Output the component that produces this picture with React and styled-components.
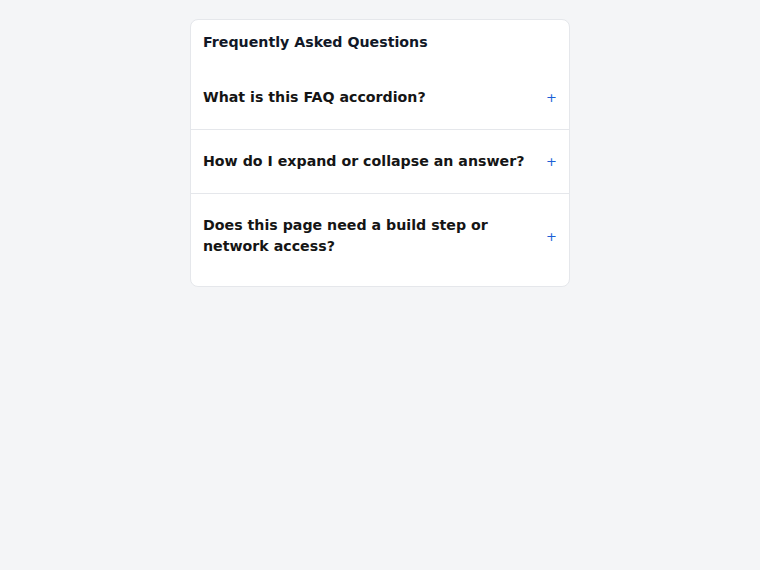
import React, { useState } from 'react'
import styled, { createGlobalStyle } from 'styled-components'

const GlobalStyle = createGlobalStyle`
  html, body {
    margin: 0;
    padding: 0;
    background: #f4f5f7;
    font-family: "DejaVu Sans", sans-serif;
    color: #111827;
  }
`

const Page = styled.main`
  display: flex;
  justify-content: center;
  padding-top: 19px;
`

const Card = styled.section`
  width: 378px;
  background: #ffffff;
  border: 1px solid #e5e7eb;
  border-radius: 8px;
  padding-bottom: 8px;
`

const Title = styled.h2`
  margin: 0;
  padding: 12px 12px 13px;
  font-size: 14.2px;
  line-height: 21px;
  font-weight: 700;
`

const Item = styled.div`
  border-bottom: ${(p) => (p.$last ? 'none' : '1px solid #e5e7eb')};
`

const Question = styled.button`
  display: flex;
  align-items: center;
  justify-content: space-between;
  gap: 16px;
  width: 100%;
  padding: 21px 12px;
  border: 0;
  background: none;
  text-align: left;
  font-family: inherit;
  font-size: 14.2px;
  line-height: 21px;
  font-weight: 700;
  color: #151515;
  cursor: pointer;
`

const Sign = styled.span`
  flex: none;
  font-size: 13px;
  font-weight: 400;
  color: #1d5fd6;
`

const Answer = styled.p`
  margin: 0;
  padding: 0 12px 16px;
  font-size: 13px;
  line-height: 20px;
  color: #4b5563;
`

const faqs = [
  {
    q: 'What is this FAQ accordion?',
    a: 'A simple list of questions that reveal their answers when clicked.',
  },
  {
    q: 'How do I expand or collapse an answer?',
    a: 'Click a question to toggle its answer open or closed.',
  },
  {
    q: 'Does this page need a build step or network access?',
    a: 'No. It runs entirely in the browser without any network requests.',
  },
]

const App = () => {
  const [open, setOpen] = useState(null)

  return (
    <>
      <GlobalStyle />
      <Page>
        <Card>
          <Title>Frequently Asked Questions</Title>
          {faqs.map((f, i) => (
            <Item key={f.q} $last={i === faqs.length - 1}>
              <Question onClick={() => setOpen(open === i ? null : i)}>
                <span>{f.q}</span>
                <Sign>{open === i ? '−' : '+'}</Sign>
              </Question>
              {open === i && <Answer>{f.a}</Answer>}
            </Item>
          ))}
        </Card>
      </Page>
    </>
  )
}

export default App
